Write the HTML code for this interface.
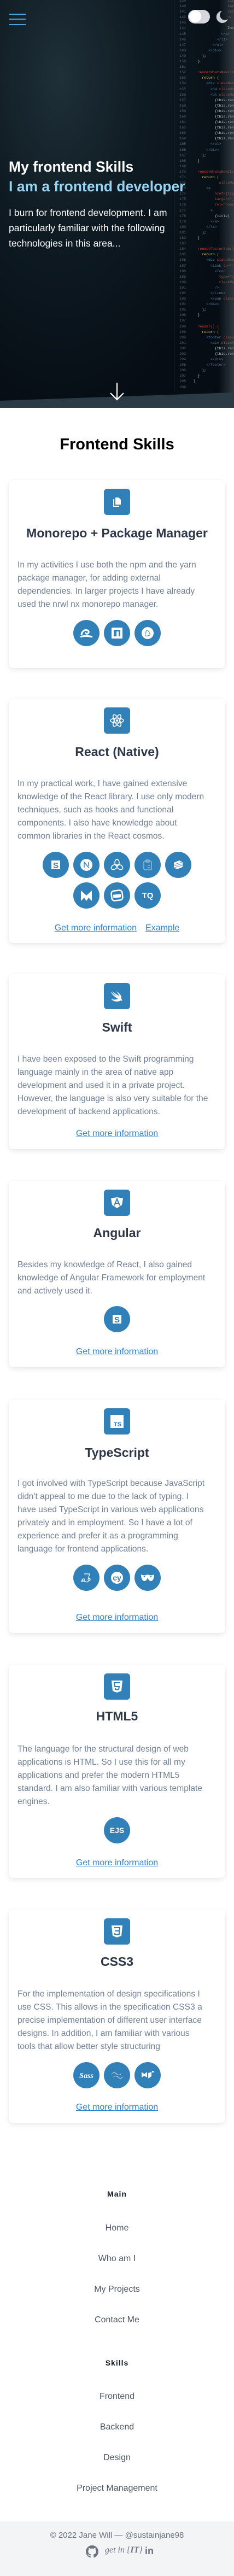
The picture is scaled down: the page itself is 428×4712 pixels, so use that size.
<!DOCTYPE html>
<html><head><meta charset="utf-8">
<style>
*{margin:0;padding:0;box-sizing:border-box}
body{width:428px;height:4712px;background:#fff;font-family:"Liberation Sans",Arial,sans-serif;position:relative;overflow:hidden}
.hero{position:absolute;left:0;top:0;width:428px;height:746px;overflow:hidden;background:radial-gradient(ellipse at 110px 140px,#1f3038 0%,#0e1a22 35%,#060d14 75%),#07101a}
.nums{position:absolute;left:322px;top:-3px;font:6.5px/10.1px "Liberation Mono",monospace;color:#56616a;white-space:pre;text-align:right;width:18px}
.code{position:absolute;left:346px;top:-3px;font:6.5px/10.1px "Liberation Mono",monospace;color:#7f97ad;white-space:pre}
.code .r{color:#c4412b}.code .y{color:#d8c87a}.code .b{color:#4b7fa8}.code .w{color:#c9d0d6}
.vline{position:absolute;left:318px;top:0;width:1px;height:716px;background:#1d2730}
.glow{position:absolute;left:400px;top:0;width:28px;height:720px;background:linear-gradient(90deg,rgba(40,50,58,0),rgba(90,100,108,.5))}
.dock{position:absolute;left:0;top:718px;width:428px;height:40px;background:#2b3b45;transform:skewY(-2deg);transform-origin:right top}
.card{position:absolute;left:16px;width:396px;background:#fff;border-radius:8px;box-shadow:0 4px 10px rgba(0,0,0,.08),0 0 3px rgba(0,0,0,.04)}
.ib{position:absolute;left:174px;top:16px;width:48px;height:48px;border-radius:6px;background:#3280b8;display:flex;align-items:center;justify-content:center}
.t{position:absolute;left:0;width:396px;text-align:center;font-size:23px;font-weight:bold;color:#2d3748;line-height:34px}
.p{position:absolute;left:16px;width:370px;font-size:15.6px;line-height:24px;color:#718096;white-space:nowrap}
.row{position:absolute;left:0;width:396px;display:flex;justify-content:center;gap:8px}
.c{width:48px;height:48px;border-radius:50%;background:#3280b8;display:flex;align-items:center;justify-content:center;color:#fff;font-weight:bold}
.lk{position:absolute;left:0;width:396px;text-align:center;font-size:16px;line-height:24px;color:#3182ce;text-decoration:underline}
.lk span{margin:0 8px}
.fn{position:absolute;left:0;width:428px;text-align:center;font-size:16px;color:#4b5563;line-height:20px}
.fh{position:absolute;left:0;width:428px;text-align:center;font-size:14px;font-weight:bold;color:#111827;letter-spacing:1px;line-height:20px}
</style></head><body>

<div class="hero">
<div class="vline"></div>
<div class="nums">139
140
141
142
143
144
145
146
147
148
149
150
151
152
153
154
155
156
157
158
159
160
161
162
163
164
165
166
167
168
169
170
171
172
173
174
175
176
177
178
179
180
181
182
183
184
185
186
187
188
189
190
191
192
193
194
195
196
197
198
199
200
201
202
203
204
205
206
207
208
209</div>
<div class="code">                  <span class="r">title</span>
                  <span class="r">target</span>
                  <span class="r">rel=</span>
                  <span class="r">>{</span>
               &gt;
                  <span class="w">Instag</span>
               <span class="b">&lt;/a&gt;</span>
             <span class="b">&lt;/li&gt;</span>
           <span class="b">&lt;/ul&gt;</span>
         <span class="b">&lt;/div&gt;</span>
      <span class="w">);</span>
    <span class="w">}</span>

    <span class="r">renderWhatsNewLink</span>
      <span class="y">return (</span>
        <span class="b">&lt;div</span> <span class="r">className</span>
          <span class="b">&lt;h4</span> <span class="r">className</span>
          <span class="b">&lt;ul</span> <span class="r">className</span>
            <span class="w">{this.rende</span>
            <span class="w">{this.rende</span>
            <span class="w">{this.rende</span>
            <span class="w">{this.rende</span>
            <span class="w">{this.rende</span>
            <span class="w">{this.rende</span>
            <span class="w">{this.rende</span>
            <span class="w">{this.rende</span>
          <span class="b">&lt;/ul&gt;</span>
        <span class="b">&lt;/div&gt;</span>
      <span class="w">);</span>
    <span class="w">}</span>

    <span class="r">renderWhatsNewItem(</span>
      <span class="y">return (</span>
              <span class="r">className={</span>
        <span class="b">&lt;a</span>
            <span class="r">href={track</span>
            <span class="r">target="_bl</span>
            <span class="r">rel="nooper</span>
          &gt;
            <span class="w">{title}</span>
          <span class="b">&lt;/a&gt;</span>
        <span class="b">&lt;/li&gt;</span>
      <span class="w">);</span>
    <span class="w">}</span>

    <span class="r">renderFooterSub() {</span>
      <span class="y">return (</span>
        <span class="b">&lt;div</span> <span class="r">className=</span>
          <span class="b">&lt;Link</span> <span class="r">to="/"</span>
            <span class="b">&lt;Icon</span>
              <span class="r">type="logo</span>
              <span class="r">className=</span>
            <span class="b">/&gt;</span>
          <span class="b">&lt;/Link&gt;</span>
          <span class="b">&lt;span</span> <span class="r">classNam</span>
        <span class="b">&lt;/div&gt;</span>
      <span class="w">);</span>
    <span class="w">}</span>

    <span class="r">render() {</span>
      <span class="y">return (</span>
        <span class="b">&lt;footer</span> <span class="r">classNam</span>
          <span class="b">&lt;div</span> <span class="r">classNam</span>
            <span class="w">{this.rende</span>
            <span class="w">{this.rende</span>
          <span class="b">&lt;/div&gt;</span>
        <span class="b">&lt;/footer&gt;</span>
      <span class="w">);</span>
    <span class="w">}</span>
  <span class="w">}</span>
</div>
<div class="glow"></div>
<div class="dock"></div>
<!-- hamburger -->
<div style="position:absolute;left:17px;top:25px;width:30px;height:2px;background:#4aa3df"></div>
<div style="position:absolute;left:17px;top:34px;width:30px;height:2px;background:#4aa3df"></div>
<div style="position:absolute;left:17px;top:44px;width:30px;height:2px;background:#4aa3df"></div>
<!-- toggle -->
<div style="position:absolute;left:344px;top:18px;width:40px;height:25px;border-radius:13px;background:#d5d7dc"></div>
<div style="position:absolute;left:346px;top:19px;width:22px;height:22px;border-radius:50%;background:#fff"></div>
<svg style="position:absolute;left:394px;top:18px" width="24" height="26" viewBox="0 0 24 26"><path d="M12 2 A11 11 0 1 0 23 17 A9 9 0 0 1 12 2Z" fill="#c8ccd2"/></svg>
<div style="position:absolute;left:16px;top:287px;font-size:26.5px;font-weight:bold;color:#fff;line-height:36px;white-space:nowrap">My frontend Skills</div>
<div style="position:absolute;left:16px;top:323px;font-size:26.5px;font-weight:bold;color:#99d3f2;line-height:36px;white-space:nowrap">I am a frontend developer</div>
<div style="position:absolute;left:16px;top:375px;font-size:17.6px;color:#fff;line-height:28px;white-space:nowrap">I burn for frontend development. I am<br>particularly familiar with the following<br>technologies in this area...</div>
<svg style="position:absolute;left:199px;top:698px" width="30" height="36" viewBox="0 0 30 36"><path d="M15 2V33M3 21L15 33L27 21" stroke="#fff" stroke-width="2.2" fill="none"/></svg>
</div>

<div style="position:absolute;left:0;top:795px;width:428px;text-align:center;font-size:29px;font-weight:bold;color:#000;line-height:36px">Frontend Skills</div>

<!-- Card 1 -->
<div class="card" style="top:878px;height:344px">
<div class="ib"><svg width="22" height="22" viewBox="0 0 22 22"><path d="M8 3h6l4 4v9H8z" fill="#fff"/><path d="M5 6v13h10" stroke="#fff" stroke-width="2" fill="none"/></svg></div>
<div class="t" style="top:80px">Monorepo + Package Manager</div>
<div class="p" style="top:144px">In my activities I use both the npm and the yarn<br>package manager, for adding external<br>dependencies. In larger projects I have already<br>used the nrwl nx monorepo manager.</div>
<div class="row" style="top:256px">
<div class="c"><svg width="26" height="20" viewBox="0 0 26 20"><path d="M4 14c0-7 6-11 11-9 3 1 3 5 0 6-2 1-4-1-3-2M2 17c6-2 14-2 22 0" stroke="#fff" stroke-width="3" fill="none"/></svg></div>
<div class="c"><svg width="24" height="24" viewBox="0 0 24 24"><path d="M2 2h20v20H2z M6 6v12h5V9h4v9h3V6z" fill="#fff" fill-rule="evenodd"/></svg></div>
<div class="c"><svg width="24" height="24"><circle cx="12" cy="12" r="11" fill="#fff"/><path d="M8 17c-2-3 1-4 1-7s3-4 4-2c2 3 4 5 3 8-3 1-5 2-8 1z" stroke="#3280b8" fill="none"/></svg></div>
</div>
</div>

<!-- Card 2 -->
<div class="card" style="top:1278px;height:447px">
<div class="ib"><svg width="28" height="24" viewBox="0 0 28 24"><ellipse cx="14" cy="12" rx="12" ry="4.5" stroke="#fff" stroke-width="1.6" fill="none"/><ellipse cx="14" cy="12" rx="12" ry="4.5" stroke="#fff" stroke-width="1.6" fill="none" transform="rotate(60 14 12)"/><ellipse cx="14" cy="12" rx="12" ry="4.5" stroke="#fff" stroke-width="1.6" fill="none" transform="rotate(-60 14 12)"/><circle cx="14" cy="12" r="2.2" fill="#fff"/></svg></div>
<div class="t" style="top:80px">React (Native)</div>
<div class="p" style="top:144px">In my practical work, I have gained extensive<br>knowledge of the React library. I use only modern<br>techniques, such as hooks and functional<br>components. I also have knowledge about<br>common libraries in the React cosmos.</div>
<div class="row" style="top:280px">
<div class="c"><svg width="22" height="22"><path d="M3 3h16v16H3z" fill="#fff"/><text x="11" y="17" text-anchor="middle" font-size="15" font-weight="bold" fill="#3280b8" font-family="Liberation Sans">S</text></svg></div>
<div class="c"><svg width="24" height="24"><circle cx="12" cy="12" r="11" fill="#fff"/><path d="M8 17V7l9 11M16 7v7" stroke="#3280b8" stroke-width="1.5" fill="none"/></svg></div>
<div class="c"><svg width="26" height="24" viewBox="0 0 26 24" fill="none" stroke="#fff" stroke-width="1.6"><ellipse cx="13" cy="8" rx="4" ry="6"/><ellipse cx="8" cy="16" rx="6" ry="4" transform="rotate(-30 8 16)"/><ellipse cx="18" cy="16" rx="6" ry="4" transform="rotate(30 18 16)"/></svg></div>
<div class="c"><svg width="20" height="22" fill="none" stroke="#9cc3e0" stroke-width="1.3"><rect x="3" y="4" width="14" height="16" rx="2"/><rect x="7" y="2" width="6" height="4" rx="1"/><path d="M10 12h4M10 16h4"/></svg></div>
<div class="c"><svg width="24" height="24" fill="#fff"><path d="M4 8l10-4 6 3v9l-10 4-6-3z"/><path d="M5 11l14-4M5 14l14-4M5 17l14-4" stroke="#3280b8" stroke-width=".8"/></svg></div>
</div>
<div class="row" style="top:336px">
<div class="c"><svg width="24" height="24"><path d="M2 3l10 9L22 3v19l-6-6-4 6-4-6-6 6z" fill="#fff"/></svg></div>
<div class="c"><svg width="24" height="24"><rect x="2" y="3" width="20" height="18" rx="5" transform="rotate(-6 12 12)" stroke="#fff" stroke-width="2.5" fill="none"/><path d="M5 10h14v6H5z" fill="#fff" transform="rotate(-6 12 12)"/></svg></div>
<div class="c" style="font-size:15px">TQ</div>
</div>
<div class="lk" style="top:408px"><span>Get more information</span><span>Example</span></div>
</div>

<!-- Card 3 Swift -->
<div class="card" style="top:1782px;height:320px">
<div class="ib"><svg width="30" height="24" viewBox="0 0 30 24"><path d="M3 4c6 5 11 8 15 10-5-3-9-7-12-11 5 4 10 7 14 9-2-3-4-6-6-9 6 4 10 9 9 14 1 1 2 3 1 4-1-1-3-1-4 0-5 2-12 1-16-4 4 2 9 2 13 0C11 14 6 9 3 4z" fill="#fff"/></svg></div>
<div class="t" style="top:80px">Swift</div>
<div class="p" style="top:144px">I have been exposed to the Swift programming<br>language mainly in the area of native app<br>development and used it in a private project.<br>However, the language is also very suitable for the<br>development of backend applications.</div>
<div class="lk" style="top:280px"><span>Get more information</span></div>
</div>

<!-- Card 4 Angular -->
<div class="card" style="top:2160px;height:341px">
<div class="ib"><svg width="24" height="22" viewBox="0 0 24 22"><path d="M1 3l11-2 11 2-2 12-9 6-9-6z" fill="#fff"/><path d="M7 16l5-12 5 12M9 12h6" stroke="#3280b8" stroke-width="2" fill="none"/></svg></div>
<div class="t" style="top:78px">Angular</div>
<div class="p" style="top:142px">Besides my knowledge of React, I also gained<br>knowledge of Angular Framework for employment<br>and actively used it.</div>
<div class="row" style="top:229px">
<div class="c"><svg width="22" height="22"><path d="M3 3h16v16H3z" fill="#fff"/><text x="11" y="17" text-anchor="middle" font-size="15" font-weight="bold" fill="#3280b8" font-family="Liberation Sans">S</text></svg></div>
</div>
<div class="lk" style="top:301px"><span>Get more information</span></div>
</div>

<!-- Card 5 TypeScript -->
<div class="card" style="top:2560px;height:427px">
<div class="ib"><svg width="24" height="24"><rect x="0" y="0" width="24" height="24" fill="#fff"/><text x="13" y="21" text-anchor="middle" font-size="11" font-weight="bold" fill="#3280b8" font-family="Liberation Sans">TS</text></svg></div>
<div class="t" style="top:80px">TypeScript</div>
<div class="p" style="top:142px">I got involved with TypeScript because JavaScript<br>didn't appeal to me due to the lack of typing. I<br>have used TypeScript in various web applications<br>privately and in employment. So I have a lot of<br>experience and prefer it as a programming<br>language for frontend applications.</div>
<div class="row" style="top:302px">
<div class="c"><svg width="24" height="22" fill="none" stroke="#fff" stroke-width="1.2"><path d="M8 4h10l-2 6 3 5-6 4-6-2-4 1 2-5"/><circle cx="7" cy="15" r="2"/><circle cx="17" cy="14" r="2"/></svg></div>
<div class="c"><svg width="28" height="24"><circle cx="14" cy="12" r="11" fill="#fff"/><text x="14" y="17" text-anchor="middle" font-size="14" font-weight="bold" fill="#3280b8" font-family="Liberation Sans">cy</text></svg></div>
<div class="c"><svg width="28" height="20"><path d="M2 4c4 2 8 2 12 0 4 2 8 2 12 0 0 6-2 12-6 12-3 0-5-3-6-6-1 3-3 6-6 6-4 0-6-6-6-12z" fill="#fff"/><circle cx="8" cy="8" r="1.3" fill="#3280b8"/><circle cx="20" cy="8" r="1.3" fill="#3280b8"/></svg></div>
</div>
<div class="lk" style="top:387px"><span>Get more information</span></div>
</div>

<!-- Card 6 HTML5 -->
<div class="card" style="top:3045px;height:390px">
<div class="ib"><svg width="22" height="24" viewBox="0 0 22 24"><path d="M1 1h20l-2 19-8 3-8-3z" fill="#fff"/><path d="M16 5H6l1 7h8l-1 5-3 1-3-1v-2" stroke="#3280b8" stroke-width="2" fill="none"/></svg></div>
<div class="t" style="top:77px">HTML5</div>
<div class="p" style="top:143px">The language for the structural design of web<br>applications is HTML. So I use this for all my<br>applications and prefer the modern HTML5<br>standard. I am also familiar with various template<br>engines.</div>
<div class="row" style="top:279px"><div class="c" style="font-size:14px">EJS</div></div>
<div class="lk" style="top:351px"><span>Get more information</span></div>
</div>

<!-- Card 7 CSS3 -->
<div class="card" style="top:3493px;height:390px">
<div class="ib"><svg width="22" height="24" viewBox="0 0 22 24"><path d="M1 1h20l-2 19-8 3-8-3z" fill="#fff"/><path d="M6 5h10l-1 12-4 1-4-1v-2M7 11h8" stroke="#3280b8" stroke-width="2" fill="none"/></svg></div>
<div class="t" style="top:78px">CSS3</div>
<div class="p" style="top:143px">For the implementation of design specifications I<br>use CSS. This allows in the specification CSS3 a<br>precise implementation of different user interface<br>designs. In addition, I am familiar with various<br>tools that allow better style structuring</div>
<div class="row" style="top:279px">
<div class="c"><svg width="30" height="20"><text x="15" y="15" text-anchor="middle" font-size="14" font-style="italic" fill="#fff" font-family="Liberation Serif">Sass</text></svg></div>
<div class="c"><svg width="28" height="18"><path d="M3 8c3-5 7-5 10-2s6 3 9-1c-2 5-6 5-9 2s-7-3-10 1zM6 14c3-5 7-5 10-2s6 3 9-1c-2 5-6 5-9 2s-7-3-10 1z" fill="#fff"/></svg></div>
<div class="c"><svg width="26" height="20"><path d="M2 4l5 4 5-4v10l-5-3-5 3zM14 6l6-2v8l-6 4zM21 2h3v3h-3z" fill="#fff"/></svg></div>
</div>
<div class="lk" style="top:350px"><span>Get more information</span></div>
</div>

<!-- footer nav -->
<div class="fh" style="top:4003px">Main</div>
<div class="fn" style="top:4066px">Home</div>
<div class="fn" style="top:4122px">Who am I</div>
<div class="fn" style="top:4178px">My Projects</div>
<div class="fn" style="top:4234px">Contact Me</div>
<div class="fh" style="top:4312px">Skills</div>
<div class="fn" style="top:4374px">Frontend</div>
<div class="fn" style="top:4430px">Backend</div>
<div class="fn" style="top:4486px">Design</div>
<div class="fn" style="top:4542px">Project Management</div>

<div style="position:absolute;left:0;top:4612px;width:428px;height:100px;background:#f3f4f6">
<div style="position:absolute;left:0;top:16px;width:428px;text-align:center;font-size:15px;color:#6b7280;line-height:20px">© 2022 Jane Will — @sustainjane98</div>
<svg style="position:absolute;left:156px;top:43px" width="25" height="25" viewBox="0 0 24 24"><path d="M12 1C5.9 1 1 5.9 1 12c0 4.9 3.2 9 7.5 10.4.6.1.8-.2.8-.5v-2c-3.1.7-3.7-1.3-3.7-1.3-.5-1.3-1.2-1.6-1.2-1.6-1-.7.1-.7.1-.7 1.1.1 1.7 1.1 1.7 1.1 1 1.7 2.6 1.2 3.2.9.1-.7.4-1.2.7-1.5-2.4-.3-5-1.2-5-5.4 0-1.2.4-2.2 1.1-2.9-.1-.3-.5-1.4.1-2.9 0 0 .9-.3 3 1.1a10 10 0 0 1 5.5 0c2.1-1.4 3-1.1 3-1.1.6 1.5.2 2.6.1 2.9.7.8 1.1 1.7 1.1 2.9 0 4.2-2.6 5.1-5 5.4.4.3.7 1 .7 2v3c0 .3.2.6.8.5C19.8 21 23 16.9 23 12 23 5.9 18.1 1 12 1z" fill="#6b7280"/></svg>
<div style="position:absolute;left:192px;top:44px;font-family:'Liberation Serif',serif;font-style:italic;font-size:16px;color:#6b7280;white-space:nowrap">get in {<b>IT</b>}</div>
<div style="position:absolute;left:265px;top:44px;font-size:18px;font-weight:bold;color:#6b7280">in</div>
</div>
</body></html>
